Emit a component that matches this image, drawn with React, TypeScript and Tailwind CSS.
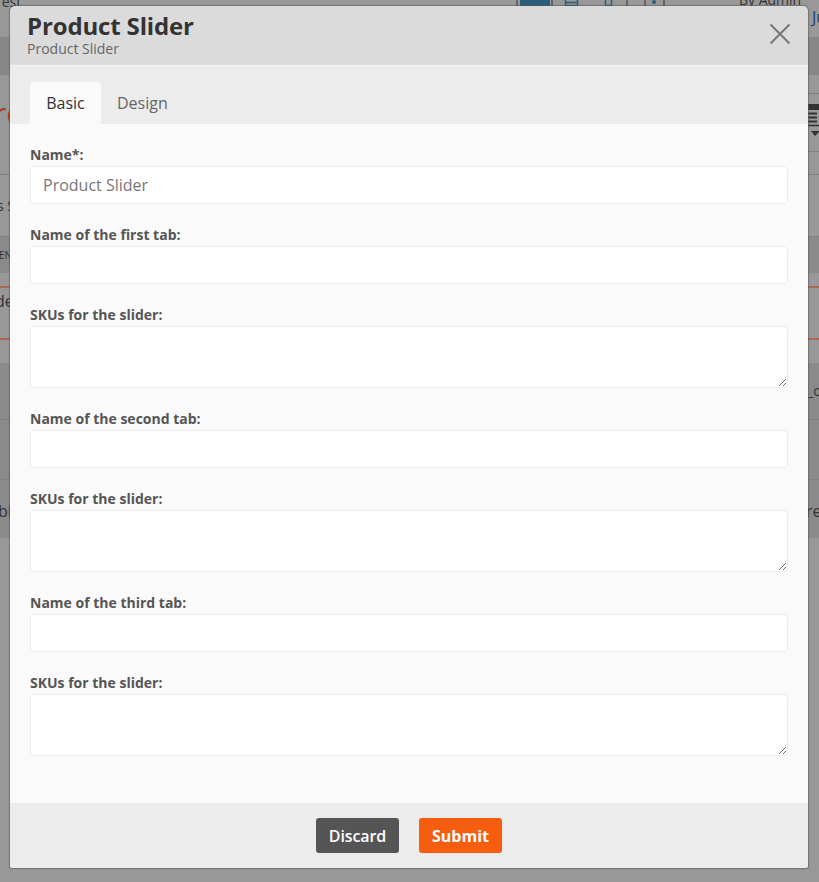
const Field = ({ label, area, value }: { label: string; area?: boolean; value?: string }) => (
  <div>
    <label className="block h-[22px] text-[14px] leading-[22px] font-bold text-[#555]">{label}</label>
    {area ? (
      <textarea className="block w-full h-[62px] resize-y rounded-[4px] border border-[#ececec] bg-white outline-none" />
    ) : (
      <input
        defaultValue={value}
        className="block w-full h-[38px] rounded-[4px] border border-[#ececec] bg-white px-3 text-[16px] text-[#777] outline-none"
      />
    )}
  </div>
)

// what shows behind the dialog, dimmed by the overlay
const Backdrop = () => (
  <div className="h-[882px] overflow-hidden bg-[#989898] text-[#333]">
    <div className="grid h-[37px] grid-cols-[516px_223px_73px_1fr] items-start">
      <span className="-mt-[9px] -ml-[6px] text-[14px]">Test</span>
      <svg width="152" height="8" viewBox="0 0 152 8">
        <path d="M1 0V6M36 0V6M111 0V6M129 0V6M148 0V6" stroke="#555" strokeWidth="1.5" fill="none" />
        <rect x="4" y="0" width="30" height="6" fill="#2a5f7a" />
        <path d="M49.500 0V5.500H61.500V0M49 2.500H62" stroke="#2a5f7a" strokeWidth="1.500" fill="none" />
        <path d="M89.500 0V5.500H95.500V0" stroke="#2a5f7a" strokeWidth="1.500" fill="none" />
        <circle cx="138" cy="2" r="2" fill="#2a5f7a" />
      </svg>
      <span className="-mt-[11px] text-[14px]">By Admin</span>
      <span className="mt-[7px] text-[16px] leading-5 text-[#27406b]">Ju</span>
    </div>
    <div className="h-[38px] bg-[#878787]" />
    <div className="grid h-[100px] grid-cols-[808px_1fr] border-b border-[#808080]">
      <span className="-ml-[6px] pt-[20px] text-[30px] leading-9 text-[#a93a1e]">ro</span>
      <div>
        <div className="h-[19px] border-b border-[#808080]" />
        <div className="h-[58px] border-b border-[#808080] pt-[10px]">
          <svg width="11" height="36" viewBox="0 0 11 36" className="block">
            <path d="M0 3H11" stroke="#333" strokeWidth="6" />
            <path d="M0 9.500H9M0 13.500H9M0 17.500H9" stroke="#333" strokeWidth="2" />
            <path d="M0 21.500H11" stroke="#333" strokeWidth="1.500" />
            <path d="M3 27H11V28L7 32Z" fill="#333" />
          </svg>
        </div>
      </div>
    </div>
    <div className="flex h-[62px] items-center border-b border-[#808080]">
      <span className="-ml-[3px] text-[14px] leading-5">s S</span>
    </div>
    <div className="flex h-[36px] items-center bg-[#8a8a8a]">
      <span className="-ml-[1px] text-[10px] leading-4">EN</span>
    </div>
    <div className="h-[13px]" />
    <div className="h-[54px] border-y-2 border-[#a9694d]">
      <span className="-ml-[5px] block pt-[1px] text-[16px] leading-6">de</span>
    </div>
    <div className="h-[23px]" />
    <div className="h-[175px] bg-[#8a8a8a]">
      <div className="grid h-[57px] grid-cols-[807px_1fr] items-center border-b border-[#808080]">
        <span />
        <span className="text-[14px] leading-5">_o</span>
      </div>
      <div className="h-[60px] border-b border-[#808080]" />
      <div className="grid h-[58px] grid-cols-[806px_1fr] items-center pt-[4px]">
        <span className="-ml-[2px] text-[16px] leading-5">bl</span>
        <span className="text-[16px] leading-5">re</span>
      </div>
    </div>
  </div>
)

export default function App() {
  return (
    <div className="relative h-[882px] w-[819px] overflow-hidden font-['Open_Sans',sans-serif]">
      <Backdrop />
      <div className="absolute top-[6px] left-[10px] flex h-[862px] w-[798px] flex-col overflow-hidden rounded-t-[5px] rounded-b-[2px] shadow-[0_0_1px_1px_rgba(90,90,90,0.6)]">
        <div className="flex h-[60px] items-start justify-between border-b border-[#f4f4f4] bg-[#dbdbdb] pt-[4px] pr-[17px] pl-[17px]">
          <div>
            <h1 className="text-[24px] leading-[32px] font-bold tracking-[-0.15px] text-[#333]">Product Slider</h1>
            <p className="-mt-[1px] text-[14px] leading-[15px] text-[#666]">Product Slider</p>
          </div>
          <button className="mt-[13px]">
            <svg width="22" height="22" viewBox="0 0 22 22" className="block">
              <path d="M1.500 1.500L20.500 20.500M20.500 1.500L1.500 20.500" stroke="#777" strokeWidth="2" fill="none" />
            </svg>
          </button>
        </div>

        <div className="flex h-[58px] items-end bg-[#ececec] pl-5 text-[16px]">
          <div className="flex h-[42px] w-[71px] items-center justify-center rounded-t-[4px] bg-[#fafafa] text-[#333]">Basic</div>
          <div className="flex h-[42px] items-center pl-4 text-[#666]">Design</div>
        </div>

        <div className="flex flex-1 flex-col gap-5 bg-[#fafafa] px-5 pt-5">
          <Field label="Name*:" value="Product Slider" />
          <Field label="Name of the first tab:" />
          <Field label="SKUs for the slider:" area />
          <Field label="Name of the second tab:" />
          <Field label="SKUs for the slider:" area />
          <Field label="Name of the third tab:" />
          <Field label="SKUs for the slider:" area />
        </div>

        <div className="flex h-[65px] justify-center gap-5 bg-[#ececec] pt-[15px]">
          <button className="h-[35px] w-[83px] rounded-[3px] bg-[#555] text-[16px] font-semibold tracking-[-0.1px] text-white">Discard</button>
          <button className="h-[35px] w-[83px] rounded-[3px] bg-[#f65d0f] text-[16px] font-bold text-white">Submit</button>
        </div>
      </div>
    </div>
  )
}
